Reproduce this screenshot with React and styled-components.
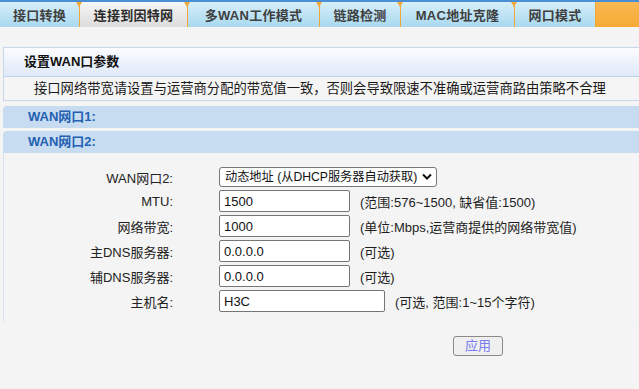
import React from "react";
import styled, { createGlobalStyle } from "styled-components";

const Global = createGlobalStyle`
  html, body { margin: 0; padding: 0; background: #f4f4f4; overflow: hidden; }
  body {
    font-family: "Liberation Sans", "Noto Sans CJK SC", sans-serif;
    font-size: 13px;
    color: #222;
  }
`;

const Page = styled.div`
  width: 639px;
  height: 389px;
  overflow: hidden;
  background: #f4f4f4;
`;

const TabBar = styled.div`
  display: flex;
  height: 25px;
  border-top: 2px solid #4a8fd4;
`;

const Tab = styled.div`
  position: relative;
  flex: 0 0 ${(p) => p.$w}px;
  display: flex;
  align-items: center;
  justify-content: center;
  font-weight: bold;
  font-size: 13px;
  color: ${(p) => (p.$active ? "#2a2a2a" : "#3f3f3f")};
  background: ${(p) =>
    p.$active
      ? "linear-gradient(#f6f6f6, #dcdcdc)"
      : "linear-gradient(#d6eefa, #a9d9ef)"};
  border-left: ${(p) => (p.$first ? "none" : "1px solid #f3a735")};
  box-sizing: border-box;
  letter-spacing: 0.3px;

  &::before {
    content: "";
    display: ${(p) => (p.$first ? "none" : "block")};
    position: absolute;
    top: 0;
    left: -4px;
    border-left: 3.5px solid transparent;
    border-right: 3.5px solid transparent;
    border-top: 5px solid #f3a735;
  }
`;

const TabFiller = styled.div`
  flex: 1;
  background: linear-gradient(#f9b952, #f6aa35);
  border-left: 1px solid #f3a735;
`;

const Content = styled.div`
  margin: 20px -20px 0 3px;
`;

const Panel = styled.div`
  border: 1px solid #c8d8ec;
  border-right: none;
`;

const PanelHeader = styled.div`
  height: 28px;
  line-height: 28px;
  padding-left: 20px;
  font-weight: bold;
  font-size: 13px;
  color: #111;
  background: linear-gradient(#fbfcff, #dfe9f8);
  border-bottom: 1px solid #bcd3ee;
`;

const Description = styled.div`
  height: 23px;
  line-height: 23px;
  padding-left: 30px;
  font-size: 13.3px;
  color: #1a1a1a;
  background: #f5f5f5;
`;

const SectionBar = styled.div`
  margin-top: ${(p) => p.$gap}px;
  height: 22px;
  line-height: 22px;
  padding-left: 25px;
  background: #c7dcf0;
  border-radius: 4px 0 0 0;
  font-weight: bold;
  font-size: 13px;
  color: #2461b2;
`;

const FormArea = styled.div`
  border-left: 1px solid #d8e3ee;
  border-bottom: 1px solid #eef2f6;
  border-bottom-left-radius: 5px;
  padding: 14px 0 12px;
  display: flex;
  flex-direction: column;
  gap: 3px;
`;

const Row = styled.div`
  display: flex;
  align-items: center;
  height: ${(p) => p.$h}px;
`;

const Label = styled.div`
  width: 169px;
  text-align: right;
  font-size: 13px;
  color: #222;
  margin-right: 46px;
  white-space: nowrap;
`;

const SelectWrap = styled.div`
  position: relative;
  width: 218px;
  height: 20px;
`;

const Select = styled.select`
  appearance: none;
  -webkit-appearance: none;
  width: 100%;
  height: 100%;
  font-family: "Liberation Sans", "Noto Sans CJK SC", sans-serif;
  font-size: 12.2px;
  color: #111;
  background: #fff;
  border: 1px solid #767676;
  border-radius: 3px;
  padding: 0 12px 0 5px;
  box-sizing: border-box;
  outline: none;
`;

const Chevron = styled.svg`
  position: absolute;
  right: 5px;
  top: 6px;
  width: 10px;
  height: 8px;
  pointer-events: none;
`;

const Input = styled.input`
  width: ${(p) => p.$w}px;
  height: 22px;
  box-sizing: border-box;
  border: 1px solid #767676;
  border-radius: 2px;
  padding: 0 4px;
  font-family: "Liberation Sans", "Noto Sans CJK SC", sans-serif;
  font-size: 13px;
  color: #111;
  background: #fff;
  outline: none;
`;

const Hint = styled.span`
  margin-left: 10px;
  font-size: 13px;
  color: #1e1e1e;
  white-space: nowrap;
`;

const ButtonRow = styled.div`
  padding: 11px 0 0 450px;
`;

const Button = styled.button`
  width: 50px;
  height: 20px;
  padding: 0;
  font-family: "Liberation Sans", "Noto Sans CJK SC", sans-serif;
  font-size: 13px;
  color: #7a7cf2;
  background: #efefef;
  border: 1px solid #8a8a8a;
  border-radius: 3px;
  line-height: 18px;
`;

const tabs = [
  { label: "接口转换", w: 79 },
  { label: "连接到因特网", w: 108, active: true },
  { label: "多WAN工作模式", w: 132 },
  { label: "链路检测", w: 81 },
  { label: "MAC地址克隆", w: 114 },
  { label: "网口模式", w: 81 },
];

const fields = [
  { label: "MTU:", value: "1500", w: 131, hint: "(范围:576~1500, 缺省值:1500)" },
  { label: "网络带宽:", value: "1000", w: 131, hint: "(单位:Mbps,运营商提供的网络带宽值)" },
  { label: "主DNS服务器:", value: "0.0.0.0", w: 131, hint: "(可选)" },
  { label: "辅DNS服务器:", value: "0.0.0.0", w: 131, hint: "(可选)" },
  { label: "主机名:", value: "H3C", w: 166, hint: "(可选, 范围:1~15个字符)" },
];

export default function App() {
  return (
    <Page>
      <Global />
      <TabBar>
        {tabs.map((t, i) => (
          <Tab key={t.label} $w={t.w} $active={t.active} $first={i === 0}>
            {t.label}
          </Tab>
        ))}
        <TabFiller />
      </TabBar>
      <Content>
        <Panel>
          <PanelHeader>设置WAN口参数</PanelHeader>
          <Description>
            接口网络带宽请设置与运营商分配的带宽值一致，否则会导致限速不准确或运营商路由策略不合理
          </Description>
        </Panel>
        <SectionBar $gap={5}>WAN网口1:</SectionBar>
        <SectionBar $gap={3}>WAN网口2:</SectionBar>
        <FormArea>
          <Row $h={20}>
            <Label>WAN网口2:</Label>
            <SelectWrap>
              <Select defaultValue="dhcp">
                <option value="dhcp">动态地址 (从DHCP服务器自动获取)</option>
                <option value="static">静态地址</option>
                <option value="pppoe">PPPoE</option>
              </Select>
              <Chevron viewBox="0 0 10 8">
                <path d="M1 1.5 L5 5.5 L9 1.5" fill="none" stroke="#111" strokeWidth="2" />
              </Chevron>
            </SelectWrap>
          </Row>
          {fields.map((f) => (
            <Row key={f.label} $h={22}>
              <Label>{f.label}</Label>
              <Input $w={f.w} defaultValue={f.value} />
              <Hint>{f.hint}</Hint>
            </Row>
          ))}
        </FormArea>
        <ButtonRow>
          <Button>应用</Button>
        </ButtonRow>
      </Content>
    </Page>
  );
}
